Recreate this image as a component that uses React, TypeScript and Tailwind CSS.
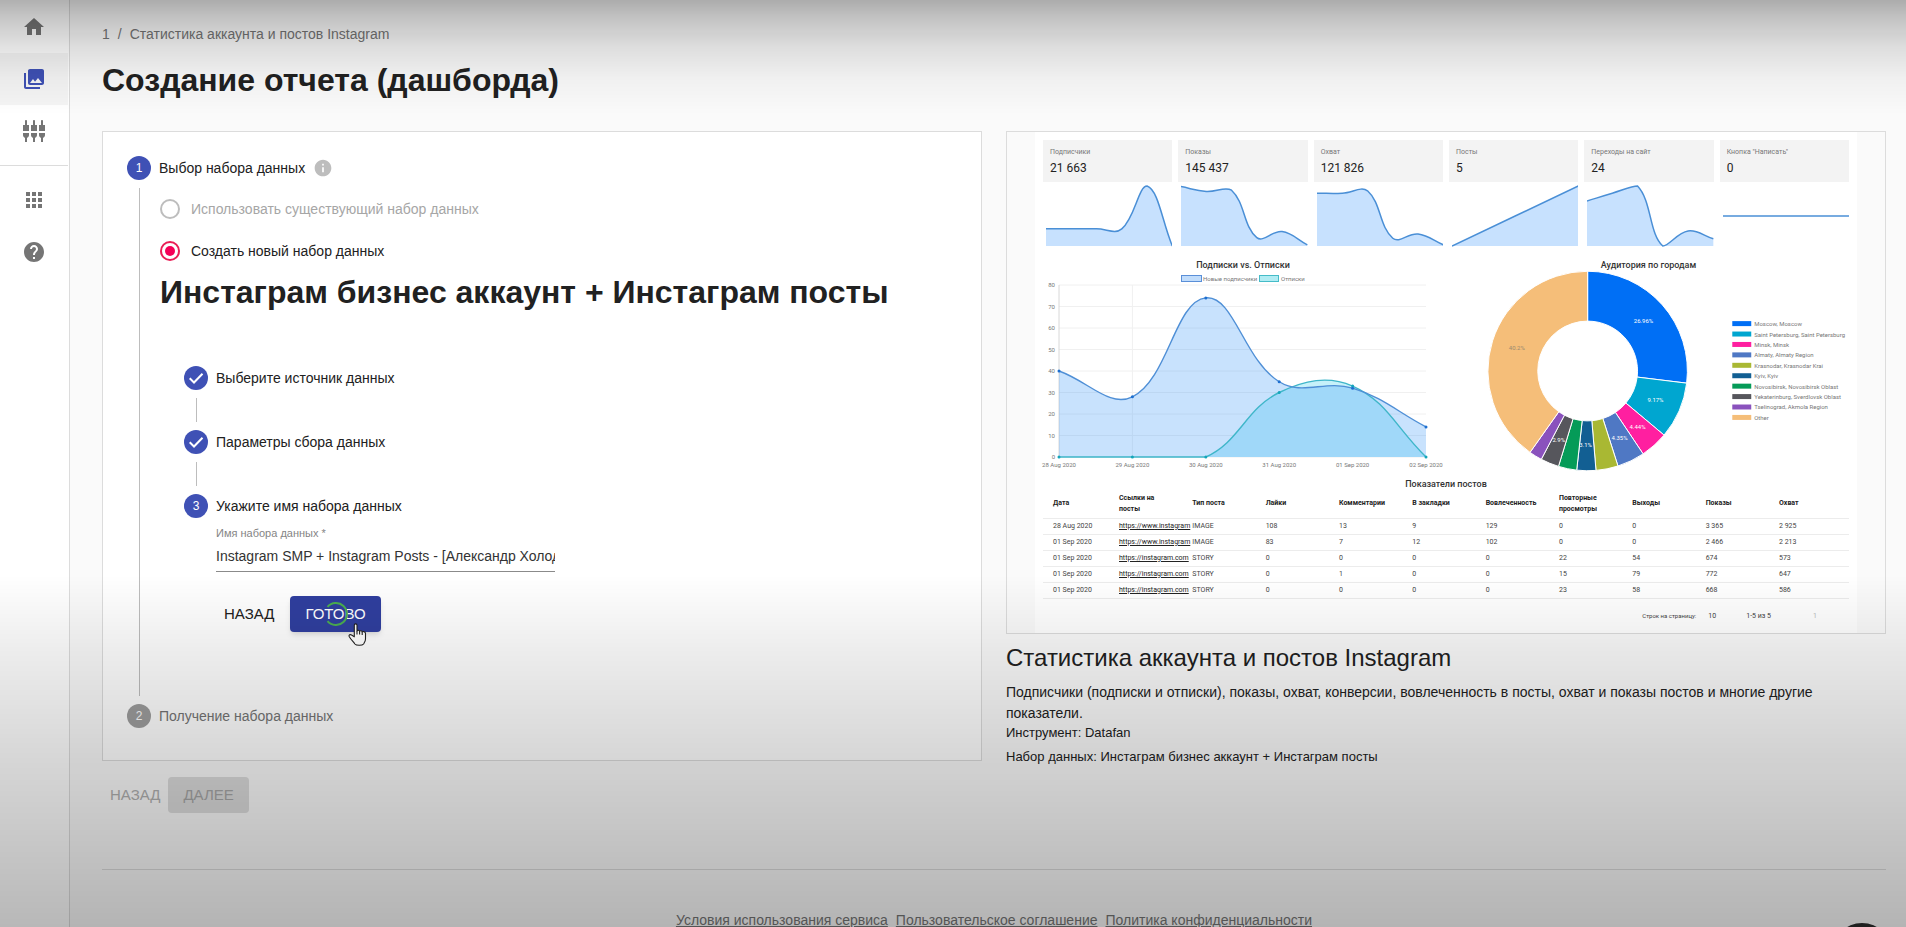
import React from "react";
import {
  MdApps,
  MdCollections,
  MdHelp,
  MdHome,
  MdInfo,
  MdSettingsInputComponent,
} from "react-icons/md";

type Point = { x: number; y: number };

/* Cardinal-like spline: control points are limited to the plot's height. */
function splinePath(points: Point[], top: number, bottom: number, tension = 0.4): string {
  const cap = (v: number) => Math.max(top, Math.min(bottom, v));
  const controls = points.map((p, i) => {
    const prev = points[i - 1] ?? p;
    const next = points[i + 1] ?? p;
    const d01 = Math.hypot(p.x - prev.x, p.y - prev.y);
    const d12 = Math.hypot(next.x - p.x, next.y - p.y);
    const total = d01 + d12 || 1;
    const fa = (tension * d01) / total;
    const fb = (tension * d12) / total;
    return {
      inX: p.x - fa * (next.x - prev.x),
      inY: cap(p.y - fa * (next.y - prev.y)),
      outX: p.x + fb * (next.x - prev.x),
      outY: cap(p.y + fb * (next.y - prev.y)),
    };
  });
  return points
    .map((p, i) => {
      if (i === 0) return `M${p.x} ${p.y}`;
      const a = controls[i - 1];
      const b = controls[i];
      return `C${a.outX} ${a.outY} ${b.inX} ${b.inY} ${p.x} ${p.y}`;
    })
    .join(" ");
}

const stats = [
  { label: "Подписчики", value: "21 663", data: [0.286, 0.286, 0.286, 0.286, 1, 0] },
  { label: "Показы", value: "145 437", data: [0.99, 0.91, 0.93, 0.14, 0.24, 0.02] },
  { label: "Охват", value: "121 826", data: [0.88, 0.88, 0.92, 0.13, 0.2, 0.02] },
  { label: "Посты", value: "5", data: [0, 1] },
  { label: "Переходы на сайт", value: "24", data: [0.75, 0.88, 1, 0, 0.25, 0.12] },
  { label: 'Кнопка "Написать"', value: "0", data: [0.5, 0.5], flat: true },
];

function Sparkline({ data, flat }: { data: number[]; flat?: boolean }) {
  const points = data.map((v, i) => ({ x: (i * 127) / (data.length - 1), y: 61 - v * 60 }));
  const line = splinePath(points, 1, 61);
  return (
    <svg viewBox="0 0 127 62" preserveAspectRatio="none" className="ml-[3px] mt-[3px] block h-[62px] w-[calc(100%-3px)]">
      {!flat && <path d={`${line} L127 61 L0 61 Z`} fill="#c7e1fe" />}
      <path d={line} fill="none" stroke="#4a8fd6" strokeWidth="1.500" vectorEffect="non-scaling-stroke" />
    </svg>
  );
}

const days = ["28 Aug 2020", "29 Aug 2020", "30 Aug 2020", "31 Aug 2020", "01 Sep 2020", "02 Sep 2020"];
const px = (i: number) => 16 + i * 73.4;
const py = (v: number) => 199 - v * 2.15;

function LineChart() {
  const subs = [40, 28, 74, 35, 32, 14].map((v, i) => ({ x: px(i), y: py(v) }));
  const unsubs = [0, 0, 0, 30, 33, 0].map((v, i) => ({ x: px(i), y: py(v) }));
  const subsLine = splinePath(subs, 27, 199);
  const unsubsLine = splinePath(unsubs, 27, 199);
  return (
    <svg viewBox="0 0 403 220" className="block w-1/2 overflow-visible font-['Roboto',sans-serif]">
      <text x="200" y="10" textAnchor="middle" fontSize="9" fontWeight="500" fill="#333">Подписки vs. Отписки</text>
      <rect x="138.500" y="17.500" width="20" height="6" fill="#c0dcfb" stroke="#5a8fd8" />
      <text x="160" y="23" fontSize="6" fill="#777">Новые подписчики</text>
      <rect x="216.500" y="17.500" width="19" height="6" fill="#b0ecf3" stroke="#45bcc8" />
      <text x="238" y="23" fontSize="6" fill="#777">Отписки</text>
      {[0, 10, 20, 30, 40, 50, 60, 70, 80].map((v) => (
        <g key={v}>
          <line x1="16" x2="383" y1={py(v)} y2={py(v)} stroke="#f0f0f0" />
          <text x="12" y={py(v) + 2} textAnchor="end" fontSize="6" fill="#777">{v}</text>
        </g>
      ))}
      <line x1={px(0)} x2={px(0)} y1="27" y2="199" stroke="#d8d8d8" />
      <line x1={px(1)} x2={px(1)} y1="27" y2="199" stroke="#f0f0f0" />
      <path d={`${unsubsLine} L383 199 L16 199 Z`} fill="#c6f1fa" />
      <path d={`${subsLine} L383 199 L16 199 Z`} fill="#4a9ef8" fillOpacity="0.3" />
      <path d={unsubsLine} fill="none" stroke="#3fb6c9" strokeWidth="1.400" />
      <path d={subsLine} fill="none" stroke="#4f8fd6" strokeWidth="1.400" />
      {unsubs.map((p) => <circle key={p.x} cx={p.x} cy={p.y} r="1.500" fill="#14a5ba" />)}
      {subs.map((p) => <circle key={p.x} cx={p.x} cy={p.y} r="1.500" fill="#1d6fd0" />)}
      {days.map((d, i) => (
        <text key={d} x={px(i)} y="209" textAnchor="middle" fontSize="6" fill="#777">{d}</text>
      ))}
    </svg>
  );
}

const cities = [
  { name: "Moscow, Moscow", color: "#006ff5", end: 97, share: "26.96%", lx: 198, ly: 63 },
  { name: "Saint Petersburg, Saint Petersburg", color: "#00a6d0", end: 130, share: "9.17%", lx: 210, ly: 142 },
  { name: "Minsk, Minsk", color: "#ff1fa0", end: 146.2, share: "4.44%", lx: 192, ly: 169 },
  { name: "Almaty, Almaty Region", color: "#4f78c4", end: 162.3, share: "4.35%", lx: 174, ly: 180 },
  { name: "Krasnodar, Krasnodar Krai", color: "#a9b833", end: 175.2 },
  { name: "Kyiv, Kyiv", color: "#125f93", end: 186.3, share: "3.1%", lx: 140, ly: 187 },
  { name: "Novosibirsk, Novosibirsk Oblast", color: "#059b58", end: 197 },
  { name: "Yekaterinburg, Sverdlovsk Oblast", color: "#56565c", end: 207.7, share: "2.9%", lx: 113, ly: 182 },
  { name: "Tselinograd, Akmola Region", color: "#8a52bd", end: 215.3 },
  { name: "Other", color: "#f5be79", end: 360, share: "40.2%", lx: 71, ly: 90 },
];

function DonutChart() {
  const at = (deg: number, r: number) => {
    const a = (deg * Math.PI) / 180;
    return `${142 + r * Math.sin(a)} ${113 - r * Math.cos(a)}`;
  };
  return (
    <svg viewBox="0 0 404 220" className="block w-1/2 font-['Roboto',sans-serif]">
      <text x="203" y="10" textAnchor="middle" fontSize="9" fontWeight="500" fill="#333">Аудитория по городам</text>
      {cities.map((c, i) => {
        const start = i ? cities[i - 1].end : 0;
        return (
          <path
            key={c.name}
            d={`M${at(start, 100)} A100 100 0 0 1 ${at(c.end, 100)} L${at(c.end, 50)} A50 50 0 0 0 ${at(start, 50)} Z`}
            fill={c.color}
            stroke="#fff"
          />
        );
      })}
      {cities.map((c) =>
        c.share ? (
          <text key={c.name} x={c.lx} y={c.ly + 2} textAnchor="middle" fontSize="6" fill={c.name === "Other" ? "#9a8a70" : "#fff"}>
            {c.share}
          </text>
        ) : null,
      )}
      {cities.map((c, i) => (
        <g key={c.name}>
          <rect x="287" y={63 + i * 10.45} width="19" height="5" fill={c.color} />
          <text x="309" y={68 + i * 10.45} fontSize="6" fill="#777">{c.name}</text>
        </g>
      ))}
    </svg>
  );
}

const columns = ["Дата", "Ссылки на посты", "Тип поста", "Лайки", "Комментарии", "В закладки", "Вовлеченность", "Повторные просмотры", "Выходы", "Показы", "Охват"];
const rows = [
  ["28 Aug 2020", "https://www.instagram", "IMAGE", "108", "13", "9", "129", "0", "0", "3 365", "2 925"],
  ["01 Sep 2020", "https://www.instagram", "IMAGE", "83", "7", "12", "102", "0", "0", "2 466", "2 213"],
  ["01 Sep 2020", "https://instagram.com", "STORY", "0", "0", "0", "0", "22", "54", "674", "573"],
  ["01 Sep 2020", "https://instagram.com", "STORY", "0", "1", "0", "0", "15", "79", "772", "647"],
  ["01 Sep 2020", "https://instagram.com", "STORY", "0", "0", "0", "0", "23", "58", "668", "586"],
];

function PostsTable() {
  return (
    <table className="w-full table-fixed border-collapse text-left text-[7px] text-[#444]">
      <thead>
        <tr className="h-7 border-b border-[#ececec]">
          {columns.map((c, i) => (
            <th
              key={c}
              className={`py-0 pl-[10px] pr-0 align-middle font-bold leading-[11px] text-[#222] ${i === 0 ? "w-[66px]" : i === 10 ? "w-20" : ""}`}
            >
              {i === 1 || i === 7 ? <span className="block w-12">{c}</span> : c}
            </th>
          ))}
        </tr>
      </thead>
      <tbody>
        {rows.map((row, r) => (
          <tr key={r} className="h-4 border-b border-[#ececec] leading-[15px]">
            {row.map((cell, i) => (
              <td key={i} className="whitespace-nowrap py-0 pl-[10px] pr-0">
                {i === 1 ? <a href="#post" className="text-[#222] underline">{cell}</a> : cell}
              </td>
            ))}
          </tr>
        ))}
      </tbody>
    </table>
  );
}

function Preview() {
  return (
    <div className="border border-[#dcdcdc] px-7">
      <div className="bg-white px-2 pt-2 font-['Roboto','Noto_Sans',sans-serif]">
        <div className="grid grid-cols-6 gap-x-[6px]">
          {stats.map((s) => (
            <div key={s.label} className="min-w-0">
              <div className="h-[42px] bg-[#f3f3f3] pl-[7px] pt-2">
                <div className="text-[7px] leading-[9px] text-[#777]">{s.label}</div>
                <div className="mt-1 text-[12px] leading-[14px] text-[#222]">{s.value}</div>
              </div>
              <Sparkline data={s.data} flat={s.flat} />
            </div>
          ))}
        </div>
        <div className="mt-[11px] flex">
          <LineChart />
          <DonutChart />
        </div>
        <h3 className="text-center text-[9px] font-medium leading-[12px] text-[#333]">Показатели постов</h3>
        <PostsTable />
        <div className="flex h-[34px] items-center pr-8 text-[7px] leading-[10px] text-[#444]">
          <label htmlFor="rows" className="ml-auto text-[6px]">Строк на страницу:</label>
          <select id="rows" defaultValue="10" className="ml-3 w-[20px] appearance-none bg-transparent">
            <option>10</option>
          </select>
          <span className="ml-[18px]">1-5 из 5</span>
          <span className="ml-[42px] text-[#bbb]">1</span>
        </div>
      </div>
    </div>
  );
}

function StepBadge({ children, muted }: { children: React.ReactNode; muted?: boolean }) {
  return (
    <span className={`flex size-6 shrink-0 items-center justify-center rounded-full text-xs text-white ${muted ? "bg-[#9e9e9e]" : "bg-[#3f51b5]"}`}>
      {children}
    </span>
  );
}

function Check() {
  return (
    <svg viewBox="0 0 24 24" className="size-6" fill="none" stroke="#fff" strokeWidth="2">
      <path d="M5.700 12.300 L10 16.500 L18.500 7.800" />
    </svg>
  );
}

function SideItem({ label, active, children }: { label: string; active?: boolean; children: React.ReactNode }) {
  return (
    <a
      href="#nav"
      aria-label={label}
      className={`flex h-[52px] items-center justify-center ${active ? "bg-[#f5f5f5] text-[#3f51b5]" : "text-[#757575]"}`}
    >
      {children}
    </a>
  );
}

export default function App() {
  return (
    <div className="flex h-screen overflow-hidden bg-[#fafafa] font-['Liberation_Sans',Arial,sans-serif] text-sm text-[#212121]">
      <nav className="w-[70px] shrink-0 border-r border-[#dcdcdc] bg-white pr-px pt-px">
        <SideItem label="Главная"><MdHome size={24} /></SideItem>
        <SideItem label="Отчеты" active><MdCollections size={24} /></SideItem>
        <SideItem label="Источники"><MdSettingsInputComponent size={24} /></SideItem>
        <hr className="my-2 border-[#dcdcdc]" />
        <SideItem label="Приложения"><MdApps size={24} /></SideItem>
        <SideItem label="Помощь"><MdHelp size={24} /></SideItem>
      </nav>

      <main className="min-w-0 flex-1 pl-8 pr-5 pt-6">
        <div className="flex gap-2 leading-5 text-[#757575]">
          <a href="#home">1</a>
          <span>/</span>
          <span>Статистика аккаунта и постов Instagram</span>
        </div>
        <h1 className="mt-4 text-[32px] font-bold leading-10">Создание отчета (дашборда)</h1>

        <div className="mt-[31px] grid grid-cols-2 items-start gap-6">
          <div>
            <section className="border border-[#dcdcdc] bg-white px-6 pb-8 pt-6">
              <div className="flex h-6 items-center gap-2">
                <StepBadge>1</StepBadge>
                <span>Выбор набора данных</span>
                <MdInfo size={20} className="text-[#bdbdbd]" />
              </div>
              <div className="my-2 ml-3 border-l border-[#bdbdbd] pb-16 pl-5">
                <label className="flex h-[42px] items-center gap-[11px] text-[#a6a6a6]">
                  <input type="radio" name="dataset" disabled className="size-5 appearance-none rounded-full border-2 border-[#bdbdbd]" />
                  Использовать существующий набор данных
                </label>
                <label className="flex h-[42px] items-center gap-[11px]">
                  <input
                    type="radio"
                    name="dataset"
                    defaultChecked
                    className="size-5 appearance-none rounded-full border-2 border-[#e91e55] bg-[#f50057] bg-clip-content p-[3px]"
                  />
                  Создать новый набор данных
                </label>
                <h2 className="whitespace-nowrap text-[32px] font-bold leading-10">Инстаграм бизнес аккаунт + Инстаграм посты</h2>

                <div className="ml-6 mt-[54px]">
                  <div className="flex h-6 items-center gap-2">
                    <StepBadge><Check /></StepBadge>
                    <span>Выберите источник данных</span>
                  </div>
                  <div className="my-2 ml-3 h-6 border-l border-[#bdbdbd]" />
                  <div className="flex h-6 items-center gap-2">
                    <StepBadge><Check /></StepBadge>
                    <span>Параметры сбора данных</span>
                  </div>
                  <div className="my-2 ml-3 h-6 border-l border-[#bdbdbd]" />
                  <div className="flex h-6 items-center gap-2">
                    <StepBadge>3</StepBadge>
                    <span>Укажите имя набора данных</span>
                  </div>
                  <div className="ml-8 pt-[7px]">
                    <label htmlFor="dataset-name" className="block text-[11px] leading-4 text-[#858585]">Имя набора данных *</label>
                    <input
                      id="dataset-name"
                      defaultValue="Instagram SMP + Instagram Posts - [Александр Холодов]"
                      className="block h-[31px] w-[339px] border-b border-[#8a8a8a] bg-transparent text-sm text-[#333] outline-none"
                    />
                    <div className="mt-6 flex gap-2">
                      <button className="h-9 rounded px-2 text-[15px]">НАЗАД</button>
                      <button className="relative h-9 rounded bg-[#303f9f] px-[15px] text-[15px] text-white shadow-md">
                        ГОТОВО
                        <svg viewBox="0 0 24 24" className="absolute left-1/2 top-1/2 size-6 -translate-x-1/2 -translate-y-1/2" fill="none" stroke="#4caf50" strokeWidth="2">
                          <path d="M3.500 4.900 A11 11 0 1 1 3.500 19.100" />
                        </svg>
                        <svg viewBox="0 0 19 24" className="absolute -bottom-[15px] right-[14px] h-6 w-[19px]" fill="#fff" stroke="#222" strokeWidth="1.100" strokeLinejoin="round">
                          <path d="M6.300 13.800 V2.300 C6.300 0.400 9 0.400 9 2.300 V8.300 C9 6.900 11.600 6.900 11.600 8.600 C11.600 7.400 14.200 7.500 14.200 9.200 C14.300 8.200 17.500 8.200 17.500 10.500 V16 C17.500 18.400 16.300 19.500 15.600 21 C14.300 22.700 8.300 22.800 6.900 21 C5.600 19 3.300 17 1.300 13.700 C0.400 12 2.300 11 3.600 12 Z" />
                          <path d="M9 8.300 V11.500 M11.600 8.600 V11.500 M14.200 9.200 V12" fill="none" />
                        </svg>
                      </button>
                    </div>
                  </div>
                </div>
              </div>
              <div className="flex h-6 items-center gap-2 text-[#757575]">
                <StepBadge muted>2</StepBadge>
                <span>Получение набора данных</span>
              </div>
            </section>
            <div className="mt-4 flex">
              <button disabled className="h-9 px-2 text-[15px] text-[#b0b0b0]">НАЗАД</button>
              <button disabled className="h-9 rounded bg-[#dcdcdc] px-[15px] text-[15px] text-[#a6a6a6]">ДАЛЕЕ</button>
            </div>
          </div>

          <div>
            <Preview />
            <h2 className="mt-2 text-2xl leading-8">Статистика аккаунта и постов Instagram</h2>
            <p className="mt-2 leading-[21px]">
              Подписчики (подписки и отписки), показы, охват, конверсии, вовлеченность в посты, охват и показы постов и многие другие показатели.
            </p>
            <p className="text-[13px] leading-[18px]">Инструмент: Datafan</p>
            <p className="mt-[6px] text-[13px] leading-[18px]">Набор данных: Инстаграм бизнес аккаунт + Инстаграм посты</p>
          </div>
        </div>

        <footer className="mt-14 flex justify-center gap-2 border-t border-[#dcdcdc] pt-10 leading-5 text-[#757575]">
          <a href="#terms" className="underline">Условия использования сервиса</a>
          <a href="#agreement" className="underline">Пользовательское соглашение</a>
          <a href="#privacy" className="underline">Политика конфиденциальности</a>
        </footer>
      </main>

      <button aria-label="Чат" className="fixed -bottom-14 right-[14px] size-[60px] rounded-full bg-[#2c2c2c] shadow-lg" />
      <div className="pointer-events-none fixed inset-0 bg-[linear-gradient(to_bottom,rgba(0,0,0,0.31)_0px,rgba(0,0,0,0.22)_18px,rgba(0,0,0,0.11)_48px,rgba(0,0,0,0.04)_78px,transparent_115px,transparent_62%,rgba(0,0,0,0.07)_70%,rgba(0,0,0,0.16)_82%,rgba(0,0,0,0.28)_100%)]" />
    </div>
  );
}
